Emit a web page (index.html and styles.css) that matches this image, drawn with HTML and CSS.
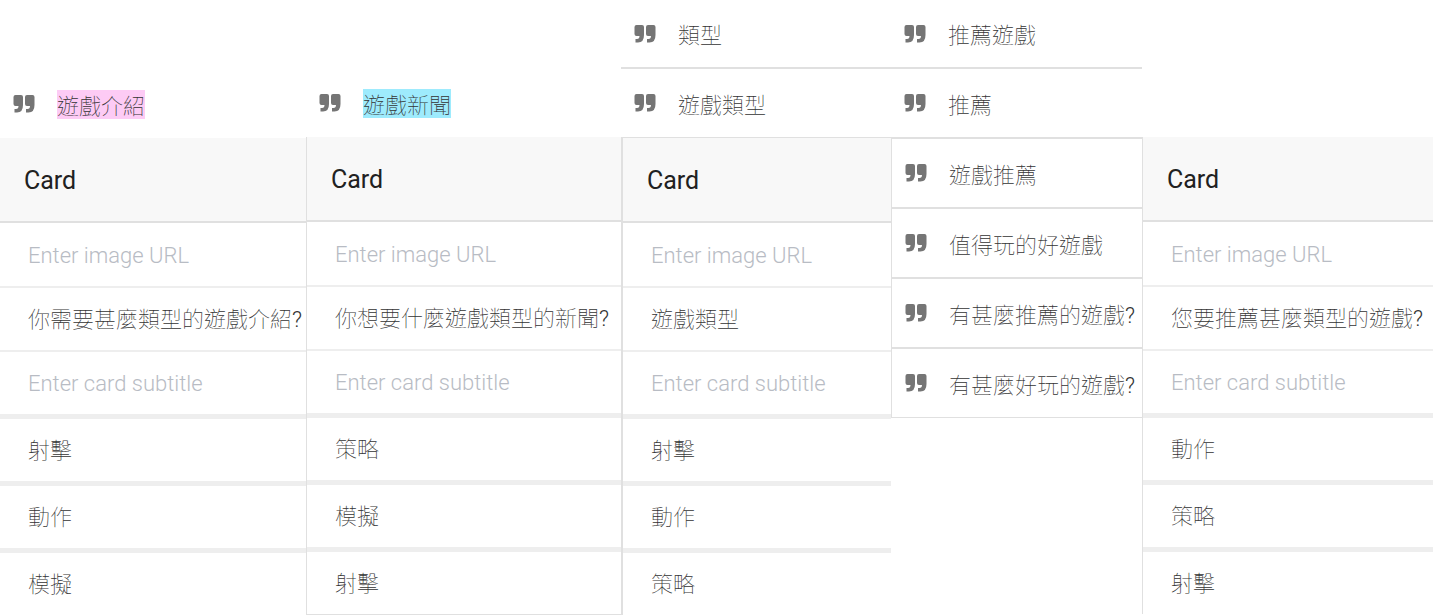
FILE: index.html
```html
<!DOCTYPE html>
<html lang="zh-Hant">
<head>
<meta charset="utf-8">
<title>Card</title>
<link rel="stylesheet" href="styles.css">
</head>
<body>
<svg class="defs" aria-hidden="true">
  <symbol id="quote" viewBox="0 0 22 18">
    <path d="M2.500 0h5.500q2 0 2 2v8q0 7.500-6 7.500H1.500v-3.500h1.500q2.500 0 2.500-3H2.500q-2 0-2-2V2q0-2 2-2zM14 0h5.500q2 0 2 2v8q0 7.500-6 7.500H13v-3.500h1.500q2.500 0 2.500-3h-3q-2 0-2-2V2q0-2 2-2z"/>
  </symbol>
</svg>
<main class="board">
  <section class="column column-intro">
    <div class="phrase"><svg class="quote"><use href="#quote"/></svg><span class="phrase-text tag-pink">遊戲介紹</span></div>
    <form class="card">
      <h2 class="card-title">Card</h2>
      <div class="fields">
        <input class="field" aria-label="Image URL" placeholder="Enter image URL">
        <input class="field filled" aria-label="Card title" value="你需要甚麼類型的遊戲介紹?">
        <input class="field" aria-label="Card subtitle" placeholder="Enter card subtitle">
        <input class="field filled option" aria-label="Button 1" value="射擊">
        <input class="field filled option" aria-label="Button 2" value="動作">
        <input class="field filled option" aria-label="Button 3" value="模擬">
      </div>
    </form>
  </section>
  <section class="column column-news">
    <div class="phrase"><svg class="quote"><use href="#quote"/></svg><span class="phrase-text tag-blue">遊戲新聞</span></div>
    <form class="card card-line card-end">
      <h2 class="card-title">Card</h2>
      <div class="fields">
        <input class="field" aria-label="Image URL" placeholder="Enter image URL">
        <input class="field filled" aria-label="Card title" value="你想要什麼遊戲類型的新聞?">
        <input class="field" aria-label="Card subtitle" placeholder="Enter card subtitle">
        <input class="field filled option" aria-label="Button 1" value="策略">
        <input class="field filled option" aria-label="Button 2" value="模擬">
        <input class="field filled option" aria-label="Button 3" value="射擊">
      </div>
    </form>
  </section>
  <section class="column">
    <div class="phrase phrase-first"><svg class="quote"><use href="#quote"/></svg><span class="phrase-text">類型</span></div>
    <div class="phrase"><svg class="quote"><use href="#quote"/></svg><span class="phrase-text">遊戲類型</span></div>
    <form class="card card-frame">
      <h2 class="card-title">Card</h2>
      <div class="fields">
        <input class="field" aria-label="Image URL" placeholder="Enter image URL">
        <input class="field filled" aria-label="Card title" value="遊戲類型">
        <input class="field" aria-label="Card subtitle" placeholder="Enter card subtitle">
        <input class="field filled option" aria-label="Button 1" value="射擊">
        <input class="field filled option" aria-label="Button 2" value="動作">
        <input class="field filled option" aria-label="Button 3" value="策略">
      </div>
    </form>
  </section>
  <section class="column">
    <div class="phrase phrase-first"><svg class="quote"><use href="#quote"/></svg><span class="phrase-text">推薦遊戲</span></div>
    <div class="phrase"><svg class="quote"><use href="#quote"/></svg><span class="phrase-text">推薦</span></div>
    <div class="phrase-list">
      <div class="phrase"><svg class="quote"><use href="#quote"/></svg><span class="phrase-text">遊戲推薦</span></div>
      <div class="phrase"><svg class="quote"><use href="#quote"/></svg><span class="phrase-text">值得玩的好遊戲</span></div>
      <div class="phrase"><svg class="quote"><use href="#quote"/></svg><span class="phrase-text">有甚麼推薦的遊戲?</span></div>
      <div class="phrase"><svg class="quote"><use href="#quote"/></svg><span class="phrase-text">有甚麼好玩的遊戲?</span></div>
    </div>
  </section>
  <section class="column column-recommend">
    <form class="card card-line">
      <h2 class="card-title">Card</h2>
      <div class="fields">
        <input class="field" aria-label="Image URL" placeholder="Enter image URL">
        <input class="field filled" aria-label="Card title" value="您要推薦甚麼類型的遊戲?">
        <input class="field" aria-label="Card subtitle" placeholder="Enter card subtitle">
        <input class="field filled option" aria-label="Button 1" value="動作">
        <input class="field filled option" aria-label="Button 2" value="策略">
        <input class="field filled option" aria-label="Button 3" value="射擊">
      </div>
    </form>
  </section>
</main>
</body>
</html>
```
FILE: styles.css
```css
* {
  box-sizing: border-box;
}

body {
  margin: 0;
  background: #fff;
  color: #333;
  font: 300 22px/29px Roboto, "Noto Sans CJK TC Thin", "Noto Sans CJK TC Light", "Noto Sans CJK TC", sans-serif;
}

.defs {
  display: block;
  width: 0;
  height: 0;
}

.board {
  display: grid;
  grid-template-columns: 306fr 315fr 270fr 251fr 291fr;
}

.column {
  min-width: 0;
}

.column-intro {
  padding-top: 70px;
}

.column-news {
  padding-top: 69px;
}

.column-recommend {
  padding-top: 137px;
}

.phrase {
  display: flex;
  align-items: center;
  gap: 22px;
  height: 68px;
  padding-left: 13px;
  white-space: nowrap;
}

.phrase-first {
  height: 69px;
  border-bottom: 2px solid #e0e0e0;
}

.phrase-text {
  padding-top: 4px;
  line-height: 25px;
}

.quote {
  flex: none;
  width: 22px;
  height: 18px;
  fill: #757575;
}

.tag-pink {
  background: #fdcbf5;
}

.tag-blue {
  background: #9eebfd;
}

.phrase-list {
  border: solid #e0e0e0;
  border-width: 2px 0 1px 1px;
}

.phrase-list .phrase + .phrase {
  height: 70px;
  border-top: 2px solid #e0e0e0;
}

.card {
  margin: 0;
}

.card-line {
  border-left: 1px solid #e0e0e0;
}

.card-end {
  border-bottom: 1px solid #e0e0e0;
}

.card-frame {
  border: solid #e0e0e0;
  border-width: 1px 0 0 2px;
}

.card-title {
  margin: 0;
  padding: 28px 24px 26px;
  border-bottom: 2px solid #e0e0e0;
  background: #f8f8f8;
  color: #212121;
  font-size: 25px;
  font-weight: 400;
}

.fields {
  display: flex;
  flex-direction: column;
  padding-top: 1px;
}

.field {
  width: 100%;
  height: 62px;
  padding: 0 0 0 28px;
  border: 0;
  outline: 0;
  background: #fff;
  color: inherit;
  font: inherit;
}

.field + .field {
  height: 64px;
  border-top: 2px solid #eee;
}

.field + .option {
  height: 67px;
  border-top-width: 5px;
}

.filled {
  padding-bottom: 4px;
}

.field::placeholder {
  color: #b8bcc4;
  opacity: 1;
}
```
